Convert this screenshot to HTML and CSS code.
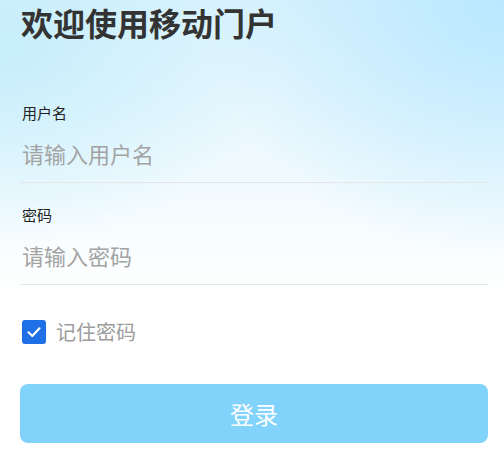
FILE: index.html
```html
<!DOCTYPE html>
<html lang="zh-CN">
<head>
    <meta charset="UTF-8">
    <meta name="viewport" content="width=device-width, initial-scale=1.0">
    <title>移动门户登录</title>
    <link rel="stylesheet" href="styles.css">
</head>
<body>
    <div class="login-page">
        <h1 class="title">欢迎使用移动门户</h1>
        <form class="login-form">
            <div class="field">
                <label class="field-label" for="username">用户名</label>
                <input class="field-input" type="text" id="username" placeholder="请输入用户名">
            </div>
            <div class="field field-second">
                <label class="field-label" for="password">密码</label>
                <input class="field-input" type="password" id="password" placeholder="请输入密码">
            </div>
            <label class="remember">
                <span class="check-box">
                    <svg width="16" height="16" viewBox="0 0 16 16"><path d="M2.5 8.3 L6.3 12 L13.5 4.3" fill="none" stroke="#fff" stroke-width="2.2" stroke-linecap="round" stroke-linejoin="round"/></svg>
                </span>
                <span class="remember-text">记住密码</span>
            </label>
            <button type="button" class="login-button">登录</button>
        </form>
    </div>
</body>
</html>
```

FILE: styles.css
```css
/* Page */
body, html {
    margin: 0;
    height: 100%;
}

body {
    font-family: "Noto Sans CJK SC", "Noto Sans", sans-serif;
    background:
        radial-gradient(ellipse 300px 260px at 100% 0%, #b9e8ff 0%, rgba(255, 255, 255, 0) 100%),
        radial-gradient(ellipse 280px 200px at 0% 10%, #c6eefb 0%, rgba(255, 255, 255, 0) 100%),
        linear-gradient(to bottom, #dcf3fd 0%, #ffffff 65%);
}

.login-page {
    padding: 0 16px 0 20px;
}

/* Title */
.title {
    margin: 0;
    font-size: 32px;
    line-height: 44px;
    font-weight: 700;
    color: #333;
    padding-left: 1px;
}

/* Form fields */
.login-form {
    display: flex;
    flex-direction: column;
}

.field {
    display: flex;
    flex-direction: column;
    margin-top: 59px;
}

.field-second {
    margin-top: 22px;
}

.field-label {
    font-size: 15px;
    line-height: 20px;
    color: #222;
    padding-left: 2px;
}

.field-input {
    margin-top: 4px;
    height: 56px;
    box-sizing: border-box;
    padding: 0 0 4px 2px;
    border: none;
    border-bottom: 1px solid #e4e6e8;
    background: transparent;
    font-family: inherit;
    font-size: 22px;
    color: #333;
    outline: none;
}

.field-input::placeholder {
    color: #a3a3a3;
}

/* Remember password */
.remember {
    display: flex;
    align-items: center;
    gap: 10px;
    margin-top: 35px;
    padding-left: 2px;
}

.check-box {
    width: 24px;
    height: 24px;
    border-radius: 3px;
    background: #1f6fe6;
    display: flex;
    align-items: center;
    justify-content: center;
}

.remember-text {
    font-size: 20px;
    line-height: 24px;
    color: #9c9c9c;
}

/* Login button */
.login-button {
    margin-top: 40px;
    height: 59px;
    border: none;
    border-radius: 8px;
    background: #81d3fc;
    color: #fff;
    font-family: inherit;
    font-size: 24px;
    cursor: pointer;
}
```
